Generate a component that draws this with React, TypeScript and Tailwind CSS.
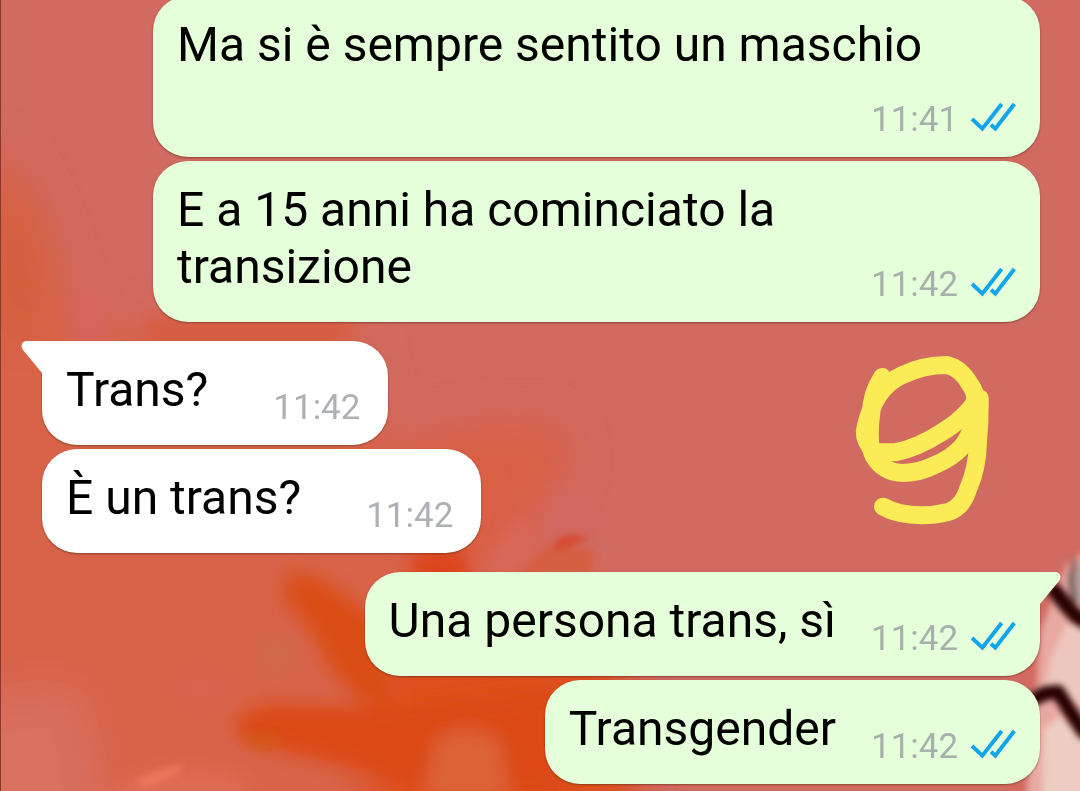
import React from "react";

type Message = {
  text: string;
  time: string;
  mine: boolean;
  startsGroup?: boolean;
  timeBelow?: boolean;
};

const messages: Message[] = [
  { text: "Ma si è sempre sentito un maschio", time: "11:41", mine: true, timeBelow: true },
  { text: "E a 15 anni ha cominciato la transizione", time: "11:42", mine: true },
  { text: "Trans?", time: "11:42", mine: false, startsGroup: true },
  { text: "È un trans?", time: "11:42", mine: false },
  { text: "Una persona trans, sì", time: "11:42", mine: true, startsGroup: true },
  { text: "Transgender", time: "11:42", mine: true },
];

function ReadTicks() {
  return (
    <svg role="img" aria-label="Letto" viewBox="0 0 135 90" className="mb-[9px] ml-3 h-[30px] w-[45px] shrink-0">
      <g fill="none" stroke="#12a5ea" strokeWidth="12">
        <path d="M3 51 34 80 92 6" />
        <path d="M60 68 73 80 130 6" />
      </g>
    </svg>
  );
}

function Tail({ mine }: { mine: boolean }) {
  return mine ? (
    <svg aria-hidden="true" viewBox="0 0 42 32" className="absolute top-0 -right-[21px] h-8 w-[42px]">
      <path d="M0 0H36C41 0 43 5 40 9L21 32H0Z" fill="#e5ffdb" />
    </svg>
  ) : (
    <svg aria-hidden="true" viewBox="0 0 42 32" className="absolute top-0 -left-[21px] h-8 w-[42px]">
      <path d="M42 0H6C1 0-1 5 2 9L21 32H42Z" fill="#ffffff" />
    </svg>
  );
}

function Bubble({ message }: { message: Message }) {
  const { mine, startsGroup, timeBelow } = message;
  const side = mine ? "self-end bg-[#e5ffdb] pr-6" : "self-start bg-white pr-[27px]";
  const margin = startsGroup ? "mt-[19px]" : "mt-1";
  const corner = !startsGroup ? "rounded-[35px]" : mine ? "rounded-[35px] rounded-tr-none" : "rounded-[35px] rounded-tl-none";
  const direction = timeBelow ? "w-full flex-col gap-[15px]" : mine ? "gap-[35px]" : "gap-[65px]";
  return (
    <li
      className={`relative flex max-w-[887px] items-end pt-5 pb-4 pl-6 shadow-[0_1px_2px_rgba(80,40,20,0.55)] ${direction} ${side} ${margin} ${corner}`}
    >
      {startsGroup && <Tail mine={mine} />}
      <p className={`relative pb-[11px] text-[48px] leading-[57px] text-black ${timeBelow ? "self-start" : "grow"}`}>
        {message.text}
      </p>
      <div className="relative flex shrink-0 items-end">
        <time className={`min-w-[88px] text-[35px] leading-[42px] ${mine ? "text-[#a6b1aa]" : "text-[#adb1b5]"}`}>
          {message.time}
        </time>
        {mine && <ReadTicks />}
      </div>
    </li>
  );
}

function Wallpaper() {
  return (
    <svg
      aria-hidden="true"
      viewBox="0 0 1080 791"
      preserveAspectRatio="none"
      className="absolute inset-0 h-full w-full"
    >
      <defs>
        <filter id="wide" x="-50%" y="-50%" width="200%" height="200%">
          <feGaussianBlur stdDeviation="22" />
        </filter>
        <filter id="mid" x="-50%" y="-50%" width="200%" height="200%">
          <feGaussianBlur stdDeviation="9" />
        </filter>
        <filter id="fine" x="-50%" y="-50%" width="200%" height="200%">
          <feGaussianBlur stdDeviation="3" />
        </filter>
      </defs>
      <rect width="1080" height="791" fill="#d16a61" />
      <g filter="url(#wide)">
        <path d="M-60 150 10 150 45 220 75 310 150 330 360 330 390 450 480 480 530 620 500 850-60 850Z" fill="#d8634a" />
        <ellipse cx="18" cy="270" rx="32" ry="85" fill="#d55e3d" />
        <path d="M400 450 450 425 560 420 575 470 540 500 520 570 400 570Z" fill="#d95f44" />
        <path d="M-40 700 80 690 110 850-40 850Z" fill="#d96f60" />
        <path d="M380 640 620 640 640 850 360 850Z" fill="#dd4f1c" />
      </g>
      <g filter="url(#mid)">
        <ellipse cx="90" cy="318" rx="18" ry="36" fill="#d6655f" />
        <path d="M145 316H350V345H145Z" fill="#d75d43" />
        <ellipse cx="200" cy="688" rx="28" ry="17" fill="#db6451" />
        <ellipse cx="276" cy="655" rx="22" ry="22" fill="#d26a48" />
        <path d="M552 500 585 490 600 530 550 525Z" fill="#d16864" />
        <path d="M286 574Q310 570 335 588L380 620 400 720 370 705Q330 680 314 636L284 598Z" fill="#da4e14" />
        <path d="M235 725Q245 702 290 705L400 710 560 690 560 800 450 800 380 775 280 750Q235 740 235 725Z" fill="#dc4a12" />
        <path d="M412 552 460 545 475 590 412 590Z" fill="#dc451a" />
        <path d="M435 740Q465 718 500 740L510 800H422Z" fill="#dc6239" />
        <path d="M480 575 500 540 530 515 528 555 510 578Z" fill="#d9675a" />
        <path d="M110 791 160 770 230 775 260 800H100Z" fill="#de6e55" />
      </g>
      <g filter="url(#fine)">
        <path d="M522 574 545 548 560 545 595 550 592 574Z" fill="#d9592f" opacity="0.6" />
        <path d="M552 546 560 537 574 534 590 538 572 545 558 551Z" fill="#d64c30" />
        <ellipse cx="262" cy="740" rx="20" ry="9" fill="#d2590f" opacity="0.6" />
        <path d="M135 782Q155 768 183 764L180 773 145 788Z" fill="#ec795e" opacity="0.8" />
      </g>
      <g filter="url(#fine)">
        <path d="M1090 550 1068 562 1052 600 1041 630 1036 690 1026 800H1090Z" fill="#e9a9a3" />
        <path d="M1090 625 1068 622 1052 655 1044 690 1090 712Z" fill="#edc6bd" />
        <path d="M1090 745 1060 715 1044 730 1042 800H1090Z" fill="#edccc1" />
        <path d="M1090 556 1078 562 1067 580 1072 602 1090 612Z" fill="#b7a19e" />
      </g>
      <g
        fill="none"
        stroke="#250504"
        strokeLinecap="round"
        strokeLinejoin="round"
        filter="url(#fine)"
      >
        <path d="M1055 591 1065 604 1076 616 1090 624" strokeWidth="15" />
        <path d="M1036 698 1046 693 1058 692 1068 708 1084 732" strokeWidth="14" />
        <path d="M1074 560 1071 580 1074 600" strokeWidth="4" opacity="0.6" />
      </g>
      <rect width="1" height="791" fill="#853a30" />
    </svg>
  );
}

function Scribble() {
  return (
    <svg
      aria-hidden="true"
      viewBox="0 0 510 600"
      className="pointer-events-none absolute top-[340px] right-[70px] h-[200px] w-[170px]"
    >
      <g fill="none" stroke="#faeb57" strokeWidth="54" strokeLinecap="round" strokeLinejoin="round">
        <path d="M127 111Q92 165 94 218Q82 310 101 348Q130 398 190 399Q240 397 282 376Q335 355 368 318Q400 275 412 200" />
        <path d="M90 320Q68 290 77 260Q90 205 116 165Q145 124 185 106Q250 75 320 75Q362 83 392 136Q420 178 390 207Q355 248 302 279Q230 325 165 337L98 337" />
        <path d="M419 175Q420 240 414 305Q412 385 385 445Q368 503 325 516Q250 534 180 519Q152 513 129 500" />
      </g>
    </svg>
  );
}

export default function App() {
  return (
    <main className="relative min-h-screen overflow-hidden bg-[#d16a61] font-['Roboto',sans-serif]">
      <Wallpaper />
      <ul className="relative -mt-2 flex flex-col pr-10 pb-[7px] pl-[42px]">
        {messages.map((message, index) => (
          <Bubble key={index} message={message} />
        ))}
      </ul>
      <Scribble />
    </main>
  );
}
